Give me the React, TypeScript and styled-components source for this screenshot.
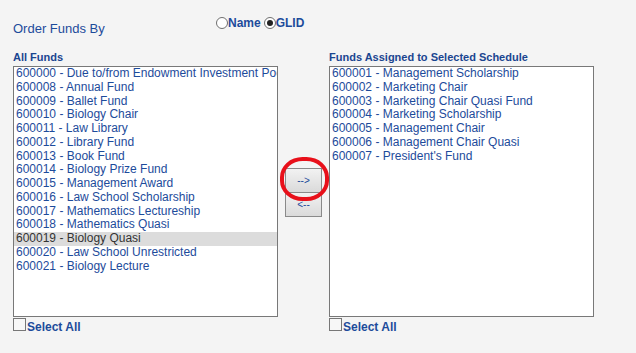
import styled, { createGlobalStyle } from "styled-components";

const GlobalStyle = createGlobalStyle`
  body {
    margin: 0;
    background: #f4f4f4;
    font-family: "Liberation Sans", Arial, sans-serif;
  }
`;

const Page = styled.div`
  padding: 0 0 0 13px;
  color: #1d4b9b;
`;

const OrderRow = styled.div`
  display: flex;
  align-items: flex-start;
  height: 51px;
`;

const OrderLabel = styled.div`
  width: 203px;
  margin-top: 21px;
  font-size: 13px;
`;

const RadioGroup = styled.div`
  display: flex;
  align-items: center;
  margin-top: 16px;
  font-size: 12px;
  font-weight: bold;
`;

const Radio = styled.span<{ $checked?: boolean }>`
  display: inline-block;
  box-sizing: border-box;
  width: 12px;
  height: 12px;
  border: 1px solid #6f6f6f;
  border-radius: 50%;
  background: #fff;
  position: relative;
  margin-left: ${(p) => (p.$checked ? "3px" : "0")};

  &:after {
    content: "";
    display: ${(p) => (p.$checked ? "block" : "none")};
    position: absolute;
    left: 2px;
    top: 2px;
    width: 6px;
    height: 6px;
    border-radius: 50%;
    background: #222;
  }
`;

const ListsRow = styled.div`
  display: flex;
  align-items: flex-start;
`;

const Column = styled.div`
  width: 265px;
`;

const Heading = styled.div`
  height: 15px;
  font-size: 11px;
  font-weight: bold;
  line-height: 13px;
  color: #1a4590;
`;

const ListBox = styled.div`
  box-sizing: border-box;
  height: 251px;
  border: 1px solid #787878;
  background: #fff;
  overflow: hidden;
`;

const Option = styled.div<{ $selected?: boolean }>`
  height: 13.75px;
  padding-left: 2px;
  font-size: 12px;
  line-height: 13.75px;
  white-space: nowrap;
  overflow: hidden;
  color: ${(p) => (p.$selected ? "#333" : "#1d4b9b")};
  background: ${(p) => (p.$selected ? "#dcdcdc" : "transparent")};
`;

const SelectAll = styled.label`
  display: flex;
  align-items: flex-start;
  margin-top: 1px;
  font-size: 12px;
  font-weight: bold;
`;

const CheckBox = styled.span`
  box-sizing: border-box;
  width: 13px;
  height: 13px;
  border: 1px solid #777;
  background: #f7f7f7;
  margin-right: 1px;
`;

const CheckText = styled.span`
  margin-top: 2px;
`;

const Middle = styled.div`
  width: 51px;
  height: 266px;
  display: flex;
  align-items: center;
  justify-content: center;
  padding-top: 15px;
  box-sizing: border-box;
`;

const ButtonStack = styled.div`
  position: relative;
  display: flex;
  flex-direction: column;
`;

const MoveButton = styled.button`
  box-sizing: border-box;
  width: 37px;
  height: 25px;
  margin: 0 0 -1px;
  padding: 0;
  border: 1px solid #8a8a8a;
  background: linear-gradient(#f2f2f2, #dadada);
  color: #1d4b9b;
  font-family: "Liberation Sans", Arial, sans-serif;
  font-size: 10px;
`;

const Highlight = styled.div`
  position: absolute;
  left: -5px;
  top: -11px;
  width: 49px;
  height: 44px;
  box-sizing: border-box;
  border: 4px solid #e8101a;
  border-radius: 46%;
  pointer-events: none;
`;

const allFunds = [
  "600000 - Due to/from Endowment Investment Pool",
  "600008 - Annual Fund",
  "600009 - Ballet Fund",
  "600010 - Biology Chair",
  "600011 - Law Library",
  "600012 - Library Fund",
  "600013 - Book Fund",
  "600014 - Biology Prize Fund",
  "600015 - Management Award",
  "600016 - Law School Scholarship",
  "600017 - Mathematics Lectureship",
  "600018 - Mathematics Quasi",
  "600019 - Biology Quasi",
  "600020 - Law School Unrestricted",
  "600021 - Biology Lecture",
];

const assignedFunds = [
  "600001 - Management Scholarship",
  "600002 - Marketing Chair",
  "600003 - Marketing Chair Quasi Fund",
  "600004 - Marketing Scholarship",
  "600005 - Management Chair",
  "600006 - Management Chair Quasi",
  "600007 - President's Fund",
];

function FundList({ title, items, selected }: { title: string; items: string[]; selected?: string }) {
  return (
    <Column>
      <Heading>{title}</Heading>
      <ListBox>
        {items.map((f) => (
          <Option key={f} $selected={f === selected}>
            {f}
          </Option>
        ))}
      </ListBox>
      <SelectAll>
        <CheckBox />
        <CheckText>Select All</CheckText>
      </SelectAll>
    </Column>
  );
}

export default function App() {
  return (
    <>
      <GlobalStyle />
      <Page>
        <OrderRow>
          <OrderLabel>Order Funds By</OrderLabel>
          <RadioGroup>
            <Radio />
            Name
            <Radio $checked />
            GLID
          </RadioGroup>
        </OrderRow>
        <ListsRow>
          <FundList title="All Funds" items={allFunds} selected="600019 - Biology Quasi" />
          <Middle>
            <ButtonStack>
              <MoveButton>--&gt;</MoveButton>
              <MoveButton>&lt;--</MoveButton>
              <Highlight />
            </ButtonStack>
          </Middle>
          <FundList title="Funds Assigned to Selected Schedule" items={assignedFunds} />
        </ListsRow>
      </Page>
    </>
  );
}
